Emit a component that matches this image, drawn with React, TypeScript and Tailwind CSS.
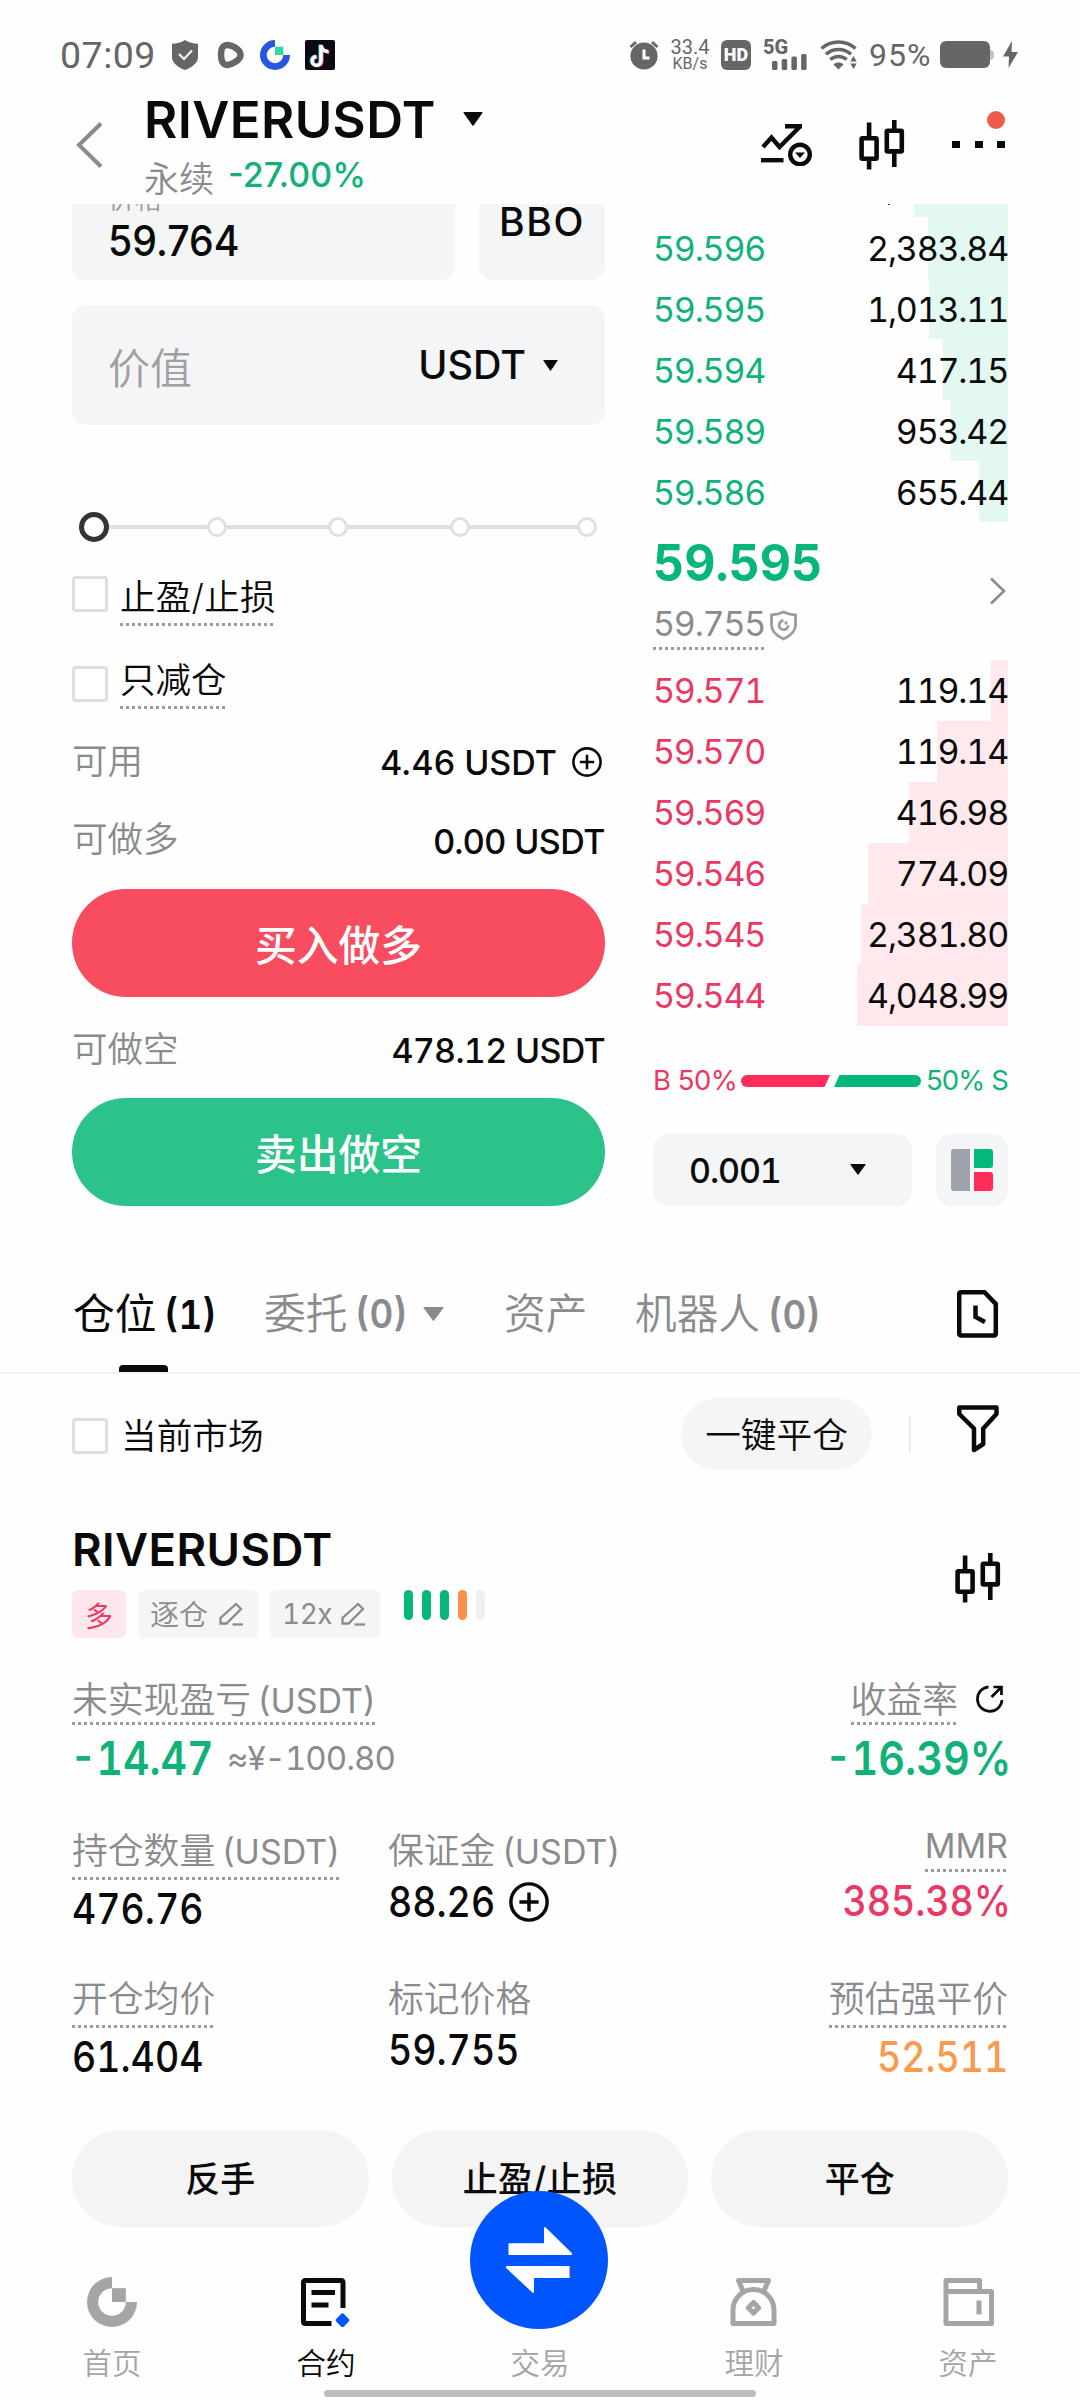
import type { ReactNode } from 'react';

/* ---------- small building blocks ---------- */

function Dots() {
  return <div className="h-[3px] w-full bg-[repeating-linear-gradient(90deg,#9b9c9e_0_3px,transparent_3px_6px)]" />;
}

function Caret({ className }: { className: string }) {
  return (
    <svg viewBox="0 0 20 14" preserveAspectRatio="none" className={className} fill="currentColor">
      <path d="M1 0h18q1 0 .4 1L10.6 13.4q-.6.8-1.2 0L.6 1Q0 0 1 0z" />
    </svg>
  );
}

function CheckBox({ className = '' }: { className?: string }) {
  return <div className={`size-[36px] shrink-0 rounded-[4px] border-[3px] border-[#dedede] bg-white ${className}`} />;
}

function PlusCircle({ size, stroke }: { size: number; stroke: number }) {
  return (
    <svg width={size} height={size} viewBox="0 0 30 30" fill="none" stroke="#0a0a0a" strokeWidth={stroke}>
      <circle cx="15" cy="15" r="13.6" />
      <path d="M15 7.8v14.4M7.8 15h14.4" />
    </svg>
  );
}

function Candles() {
  return (
    <svg width="46" height="50" viewBox="0 0 46 50" fill="none" stroke="#0a0a0a" strokeWidth="4.6">
      <rect x="2.6" y="18.2" width="15" height="20.6" rx="1" />
      <rect x="27.8" y="10.8" width="15" height="20.6" rx="1" />
      <path d="M10.1 2.5V18M10.1 39v10.500M35.300 0v11M35.300 32v15" />
    </svg>
  );
}

function GateMark({ size, ring, square }: { size: number; ring: string; square: string }) {
  return (
    <svg width={size} height={size} viewBox="0 0 50 50">
      <path d="M25 0v11.2A13.8 13.8 0 1 0 38.8 25H50A25 25 0 1 1 25 0z" fill={ring} />
      <path d="M25 11.2h13.8V25H25z" fill={square} />
    </svg>
  );
}

/* ---------- status bar ---------- */

function StatusBar() {
  return (
    <div className="flex h-[86px] items-center pt-[23px] text-[#666]">
      <span className="ml-[60px] w-[112px] font-[Roboto] text-[37.500px] leading-[40px] tracking-[0.500px]">07:09</span>
      <svg width="26" height="30" viewBox="0 0 26 30">
        <path d="M13 0c4 2.600 8 3.600 13 3.800V17c0 6-6 10.500-13 13C6 27.500 0 23 0 17V3.800C5 3.600 9 2.600 13 0z" fill="#666" />
        <path d="M7 14l5 5 8-8.500" fill="none" stroke="#fff" strokeWidth="2" />
      </svg>
      <svg className="ml-[18px]" width="28" height="28" viewBox="0 0 28 28">
        <path d="M9 4.500C14 2.500 24 8 24.500 13.500S14 25.500 9 23.500 3.500 6.500 9 4.500z" fill="none" stroke="#666" strokeWidth="6.500" />
      </svg>
      <div className="ml-[16px]">
        <GateMark size={30} ring="#2856e0" square="#2bdca0" />
      </div>
      <svg className="ml-[15px]" width="30" height="30" viewBox="0 0 30 30">
        <rect width="30" height="30" rx="2" fill="#0b0a12" />
        <g fill="none" strokeWidth="3.400">
          <path d="M15.200 4.500v16.200a4.400 4.400 0 1 1-4.600-4.400M15.200 5c.6 3.800 3.400 6 7.400 6.200" stroke="#3fe6e0" />
          <path d="M17 5.500v16a4.400 4.400 0 1 1-4.600-4.400M17 6c.6 3.800 3.400 6 7.400 6.200" stroke="#f0325a" />
          <path d="M16.100 5v16a4.400 4.400 0 1 1-4.600-4.400M16.100 5.500c.6 3.800 3.400 6 7.400 6.200" stroke="#fff" />
        </g>
      </svg>

      <svg className="ml-[294px]" width="30" height="30" viewBox="0 0 30 30">
        <circle cx="15" cy="16" r="13.600" fill="#666" />
        <path d="M1.500 7L7 2M28.500 7L23 2" stroke="#666" strokeWidth="3" />
        <path d="M15 9.500v8.500h5.500" fill="none" stroke="#fff" strokeWidth="3" />
      </svg>
      <div className="ml-[10px] flex w-[42px] flex-col items-center font-[Roboto]">
        <span className="text-[20px] leading-[18px]">33.4</span>
        <span className="text-[16px] leading-[16px]">KB/s</span>
      </div>
      <div className="ml-[10px] flex size-[30px] items-center justify-center rounded-[6px] bg-[#666] font-[Roboto] text-[18px] leading-[30px] font-black text-white">
        HD
      </div>
      <div className="ml-[12px] flex h-[30px] w-[45px] flex-col">
        <span className="h-[14px] font-[Roboto] text-[20px] leading-[14px] font-extrabold">5G</span>
        <svg className="ml-[9px]" width="36" height="16" viewBox="0 0 36 16" fill="#666">
          <rect x="0" y="7" width="5.500" height="9" rx="1.500" />
          <rect x="9.700" y="5" width="5.500" height="11" rx="1.500" />
          <rect x="19.400" y="2.500" width="5.500" height="13.500" rx="1.500" />
          <rect x="29.100" y="0" width="5.500" height="16" rx="1.500" />
        </svg>
      </div>
      <svg className="ml-[12px]" width="37" height="30" viewBox="0 0 37 30" fill="none" stroke="#666" strokeWidth="3.400">
        <path d="M1.500 8.500c9.500-8.600 24.500-8.600 34 0" />
        <path d="M6 14.200c7-6.300 18-6.300 25 0" />
        <path d="M10.300 19.600c4.700-4.200 11.700-4.200 16.400 0" />
        <path d="M13.500 24.500c2.900-2.600 7.100-2.600 10 0L18.500 29.500z" fill="#666" stroke="none" />
        <path d="M33.500 16l3.200 5.400h-6.400zM33.500 29l3.200-5.400h-6.400z" fill="#666" stroke="none" />
      </svg>
      <span className="ml-[12px] w-[71px] font-[Roboto] text-[32px] leading-[34px] tracking-[1px]">95%</span>
      <div className="h-[27px] w-[50px] rounded-[6px] bg-[#666]" />
      <div className="h-[10px] w-[4px] rounded-r bg-[#c4c4c4]" />
      <svg className="ml-[9px]" width="15" height="27" viewBox="0 0 15 27" fill="#666">
        <path d="M9 0L0 15.500h6L5.500 27 15 11H8.600z" />
      </svg>
    </div>
  );
}

/* ---------- page header ---------- */

function Header() {
  return (
    <div className="flex h-[118px]">
      <svg className="mt-[36px] ml-[76px] shrink-0" width="27" height="46" viewBox="0 0 27 46" fill="none" stroke="#8a8b8d" strokeWidth="4">
        <path d="M25 1.500L3 23l22 21.500" />
      </svg>
      <div className="ml-[41px] w-[450px]">
        <div className="flex h-[65px] items-center">
          <h1 className="pt-[1px] text-[51px] leading-[65px] font-semibold tracking-[0.400px]">RIVERUSDT</h1>
          <Caret className="ml-[27px] h-[14px] w-[20px]" />
        </div>
        <div className="flex h-[46px] items-center">
          <span className="pt-[10px] text-[35px] leading-[46px] font-[350] text-[#8a8b8d]">永续</span>
          <span className="ml-[14px] pt-[1px] text-[34px] leading-[46px] font-medium text-[#10b27a]">-27.00%</span>
        </div>
      </div>
      <svg className="mt-[36px] ml-[167px] shrink-0" width="51" height="44" viewBox="0 0 51 44" fill="none" stroke="#0a0a0a" strokeWidth="4.400">
        <path d="M2 25l8.500-9.500 8 9.500L39 4.500M24 4.200h17" />
        <path d="M0 38.200h22.500" />
        <circle cx="39" cy="32.500" r="9.800" />
        <path d="M34 30.500h10l-5 5.500z" fill="#0a0a0a" stroke="none" />
      </svg>
      <div className="mt-[33.500px] ml-[47px] shrink-0">
        <Candles />
      </div>
      <div className="relative ml-[47px] flex h-[62px] w-[53px] items-end justify-between">
        <i className="h-[7px] w-[8px] bg-[#0a0a0a]" />
        <i className="h-[7px] w-[8px] bg-[#0a0a0a]" />
        <i className="h-[7px] w-[8px] bg-[#0a0a0a]" />
        <i className="absolute top-[25px] right-0 size-[18px] rounded-full bg-[#f05a4b]" />
      </div>
    </div>
  );
}

/* ---------- order form ---------- */

function Slider() {
  return (
    <div className="relative mt-[87px] flex h-[30px] items-center">
      <div className="ml-[20px] h-[4px] w-[490px] bg-[#dedede]" />
      <i className="absolute top-0 left-[7px] size-[30px] rounded-full border-[5px] border-[#333] bg-white" />
      <i className="absolute top-[5px] left-[135px] size-[20px] rounded-full border-[3px] border-[#e0e0e0] bg-white" />
      <i className="absolute top-[5px] left-[256px] size-[20px] rounded-full border-[3px] border-[#e0e0e0] bg-white" />
      <i className="absolute top-[5px] left-[378px] size-[20px] rounded-full border-[3px] border-[#e0e0e0] bg-white" />
      <i className="absolute top-[5px] left-[505px] size-[20px] rounded-full border-[3px] border-[#e0e0e0] bg-white" />
    </div>
  );
}

function FormLine({ label, className, children }: { label: string; className: string; children: ReactNode }) {
  return (
    <div className={`flex h-[40px] items-center justify-between ${className}`}>
      <span className="text-[35.500px] leading-[40px] font-[350] text-[#8a8b8d]">{label}</span>
      {children}
    </div>
  );
}

function OrderForm() {
  return (
    <div className="flex w-[533px] flex-col">
      <div className="-mt-[44px] flex h-[120px] gap-[24px]">
        <div className="flex w-[383px] flex-col rounded-[14px] bg-[#f4f5f7] pt-[24px] pl-[36px]">
          <span className="text-[27px] leading-[32px] font-[350] text-[#9a9b9d]">价格</span>
          <span className="origin-left scale-x-[0.935] text-[42px] leading-[50px] font-medium">59.764</span>
        </div>
        <div className="flex w-[126px] items-center justify-center rounded-[14px] bg-[#f4f5f7] pt-[4px] text-[39px] font-medium tracking-[1.600px]">BBO</div>
      </div>
      <div className="mt-[25px] flex h-[120px] items-center rounded-[14px] bg-[#f4f5f7] pr-[47px] pl-[36px]">
        <span className="pt-[6px] text-[42px] font-[350] text-[#9fa0a2]">价值</span>
        <span className="ml-auto pt-[1px] text-[39.500px] font-medium">USDT</span>
        <Caret className="ml-[17px] h-[11px] w-[15px]" />
      </div>
      <Slider />
      <div className="mt-[30px] flex h-[54px]">
        <CheckBox className="mt-[4px]" />
        <div className="ml-[12px]">
          <div className="h-[51px] text-[35.500px] leading-[52px] font-[350] tracking-[0.300px]">止盈/止损</div>
          <Dots />
        </div>
      </div>
      <div className="mt-[30px] flex h-[54px]">
        <CheckBox className="mt-[10px]" />
        <div className="ml-[12px]">
          <div className="h-[50px] text-[35.500px] leading-[50px] font-[350]">只减仓</div>
          <Dots />
        </div>
      </div>
      <FormLine label="可用" className="mt-[32px]">
        <span className="flex items-center text-[34px] font-medium">
          4.46 USDT
          <span className="mr-[3px] ml-[15px]">
            <PlusCircle size={30} stroke={2.6} />
          </span>
        </span>
      </FormLine>
      <FormLine label="可做多" className="mt-[38px]">
        <span className="pt-[2px] text-[34px] font-medium tracking-[-0.500px]">0.00 USDT</span>
      </FormLine>
      <button className="mt-[29px] h-[108px] rounded-full bg-[#f84c60] pt-[6px] text-[41.800px] font-medium text-white">买入做多</button>
      <FormLine label="可做空" className="mt-[33px]">
        <span className="text-[34px] font-medium tracking-[-0.700px] tabular-nums">478.12 USDT</span>
      </FormLine>
      <button className="mt-[28px] h-[108px] rounded-full bg-[#2bc389] pt-[6px] text-[41.800px] font-medium text-white">卖出做空</button>
    </div>
  );
}

/* ---------- order book ---------- */

const upper = [
  { price: '59.596', size: '2,383.84', depth: 80 },
  { price: '59.595', size: '1,013.11', depth: 79 },
  { price: '59.594', size: '417.15', depth: 65 },
  { price: '59.589', size: '953.42', depth: 57 },
  { price: '59.586', size: '655.44', depth: 29 },
];

const lower = [
  { price: '59.571', size: '119.14', depth: 17 },
  { price: '59.570', size: '119.14', depth: 71 },
  { price: '59.569', size: '416.98', depth: 99 },
  { price: '59.546', size: '774.09', depth: 140 },
  { price: '59.545', size: '2,381.80', depth: 147 },
  { price: '59.544', size: '4,048.99', depth: 151 },
];

function BookRow({ price, size, depth, green }: { price: string; size: string; depth: number; green?: boolean }) {
  return (
    <div className="relative flex h-[61px] items-center justify-between pt-[1px] text-[34px] leading-[57px] tracking-[-1.200px] tabular-nums">
      <div className={`absolute inset-y-0 right-0 ${green ? 'bg-[#e3f8f0]' : 'bg-[#ffe9ed]'}`} style={{ width: depth }} />
      <span className={green ? 'text-[#10b27a]' : 'text-[#ea3862]'}>{price}</span>
      <span className="relative">{size}</span>
    </div>
  );
}

function OrderBook() {
  return (
    <div className="ml-[48px] flex w-[355px] flex-col">
      <div className="flex h-[13px] items-start justify-end">
        <i className="mr-[24px] h-[1px] w-[2px] bg-[#333]" />
        <div className="h-[13px] w-[94px] bg-[#e3f8f0]" />
      </div>
      {upper.map((r) => (
        <BookRow key={r.price} {...r} green />
      ))}
      <div className="flex h-[137.500px] items-center justify-between">
        <div className="flex flex-col">
          <span className="w-fit origin-left scale-x-[0.948] pt-[1px] text-[51px] leading-[62px] font-bold tabular-nums text-[#06b67b]">59.595</span>
          <div className="flex items-start">
            <div className="w-[111px]">
              <div className="h-[53px] text-[34px] leading-[60px] tracking-[-1.200px] tabular-nums text-[#8a8b8d]">59.755</div>
              <Dots />
            </div>
            <svg className="mt-[16px] ml-[5px]" width="29" height="31" viewBox="0 0 29 31" fill="none" stroke="#9b9c9e" strokeWidth="2.800">
              <path d="M14.500 2c3.500 1.800 7.500 2.800 12 3v10c0 6.500-5.500 11-12 14-6.500-3-12-7.500-12-14V5c4.500-.2 8.500-1.200 12-3z" />
              <path d="M14.500 10.500a4.600 4.600 0 1 0 4.800 4.800" />
              <path d="M15.500 11.500h3v3h-3z" fill="#9b9c9e" stroke="none" />
            </svg>
          </div>
        </div>
        <svg className="mr-[2px]" width="17" height="28" viewBox="0 0 17 28" fill="none" stroke="#8a8b8d" strokeWidth="2.600">
          <path d="M2 1.500L15 14 2 26.500" />
        </svg>
      </div>
      {lower.map((r) => (
        <BookRow key={r.price} {...r} />
      ))}
      <div className="mt-[33px] flex h-[44px] items-center text-[27.500px]">
        <span className="w-[88px] tracking-[-0.500px] whitespace-nowrap text-[#ea3862]">B 50%</span>
        <svg width="180" height="12" viewBox="0 0 180 12">
          <path d="M6 0h83l-5.500 12H6A6 6 0 0 1 6 0z" fill="#ff2c5a" />
          <path d="M98.500 0H174a6 6 0 0 1 0 12H93z" fill="#04b77c" />
        </svg>
        <span className="ml-auto tracking-[-0.900px] whitespace-nowrap text-[#10b27a]">50% S</span>
      </div>
      <div className="mt-[31px] flex h-[72px] justify-between">
        <div className="flex w-[259px] items-center rounded-[16px] bg-[#f4f5f7] pr-[46px] pl-[36px]">
          <span className="pt-[2px] text-[34px] font-medium tracking-[-1.100px] tabular-nums">0.001</span>
          <Caret className="ml-auto h-[11px] w-[16px]" />
        </div>
        <div className="flex w-[72px] items-center justify-center gap-[4px] rounded-[16px] bg-[#f4f5f7]">
          <i className="h-[42px] w-[19px] rounded-l-[3px] bg-[#9ea2aa]" />
          <div className="flex flex-col gap-[4px]">
            <i className="size-[19px] rounded-r-[3px] bg-[#04b77c]" />
            <i className="size-[19px] rounded-r-[3px] bg-[#ff2c5a]" />
          </div>
        </div>
      </div>
    </div>
  );
}

/* ---------- position tabs ---------- */

function Count({ n }: { n: string }) {
  return <span className="ml-[8px] inline-block origin-left scale-x-[0.92] text-[40px] font-semibold tabular-nums">({n})</span>;
}

function Tabs() {
  return (
    <div className="flex h-[138px] border-b-2 border-[#f1f1f1] text-[41.700px] leading-[60px] text-[#8a8b8d]">
      <div className="ml-[73px] flex w-[144px] flex-col">
        <div className="mt-[48px] h-[60px] whitespace-nowrap text-[#0a0a0a]">
          仓位
          <Count n="1" />
        </div>
        <i className="mt-auto ml-[46px] h-[7px] w-[49px] rounded-t-[4px] bg-[#0a0a0a]" />
      </div>
      <div className="mt-[48px] ml-[47px] flex h-[60px] w-[182px] items-center font-[350] whitespace-nowrap">
        委托
        <Count n="0" />
        <Caret className="ml-[10px] h-[14px] w-[21px]" />
      </div>
      <div className="mt-[48px] ml-[58px] h-[60px] w-[84px] font-[350]">资产</div>
      <div className="mt-[48px] ml-[47px] h-[60px] w-[190px] font-[350] whitespace-nowrap">
        机器人
        <Count n="0" />
      </div>
      <svg className="mt-[54px] mr-[81px] ml-auto" width="42" height="48" viewBox="0 0 42 48" fill="none" stroke="#0a0a0a" strokeWidth="4.500">
        <path d="M4 2.300h23.500L38.800 14v29.500q0 2-2 2H4.200q-2 0-2-2V4.300q0-2 2-2z" />
        <path d="M18.500 15.500V27l9.500 5" />
      </svg>
    </div>
  );
}

function FilterRow() {
  return (
    <div className="mt-[24px] flex h-[72px] items-center pl-[72px]">
      <CheckBox className="mt-[4px]" />
      <span className="ml-[13px] pt-[5px] text-[35.700px] font-[350]">当前市场</span>
      <div className="mr-[37px] ml-auto flex h-[72px] w-[191px] items-center justify-center rounded-full bg-[#f5f5f5] pt-[3px] text-[35.700px] font-[350]">
        一键平仓
      </div>
      <i className="h-[36px] w-[2px] bg-[#ececec]" />
      <svg className="mt-[-10px] mr-[81px] ml-[46px]" width="42" height="48" viewBox="0 0 42 48" fill="none" stroke="#0a0a0a" strokeWidth="4.500" strokeLinejoin="round">
        <path d="M2.300 2.500h37.200v6.500L26.200 23.500V39l-9.200 6V23.500L2.300 9z" />
      </svg>
    </div>
  );
}

/* ---------- position card ---------- */

function Pencil() {
  return (
    <svg width="25" height="24" viewBox="0 0 25 24" fill="none" stroke="#8a8b8d" strokeWidth="2.300">
      <path d="M17 2l5 5L7.500 21.500h-6V16z" />
      <path d="M13.500 22.500H24" />
    </svg>
  );
}

function Label({ text, unit, dotted = true, tight }: { text: string; unit?: string; dotted?: boolean; tight?: boolean }) {
  return (
    <div className="flex w-fit flex-col">
      <div className={`flex items-start leading-[48px] whitespace-nowrap text-[#8a8b8d] ${tight ? 'h-[49px]' : 'h-[53px]'}`}>
        <span className="pt-[3px] text-[35.800px] font-[350]">{text}</span>
        {unit && <span className="ml-[7px] pt-[4px] text-[34px]">{unit}</span>}
      </div>
      {dotted && <Dots />}
    </div>
  );
}

function Value({ children, className = '' }: { children: ReactNode; className?: string }) {
  return <span className={`block w-fit scale-x-[0.892] text-[42px] leading-[50px] font-medium tabular-nums ${className}`}>{children}</span>;
}

function PositionCard() {
  return (
    <div className="flex flex-col px-[72px]">
      <div className="mt-[50px] flex h-[118px] justify-between">
        <div className="flex flex-col">
          <h2 className="h-[60px] text-[45.500px] leading-[60px] font-semibold tracking-[0.400px]">RIVERUSDT</h2>
          <div className="mt-[10px] flex h-[48px] items-start text-[28px] leading-[48px] text-[#8a8b8d]">
            <span className="flex h-[48px] w-[54px] justify-center rounded-[6px] bg-[#ffe7ed] pt-[3px] text-[28px] text-[#ea3862]">多</span>
            <span className="ml-[12px] flex h-[48px] w-[120px] items-center rounded-[6px] bg-[#f5f5f5] pl-[12px]">
              <span className="mr-[11px] pt-[3px] text-[29px] font-[350]">逐仓</span>
              <Pencil />
            </span>
            <span className="ml-[12px] flex h-[48px] w-[110px] items-center rounded-[6px] bg-[#f5f5f5] pl-[12px]">
              <span className="mr-[9px] tracking-[-0.500px] tabular-nums [font-variant-ligatures:no-contextual]">12x</span>
              <Pencil />
            </span>
            <span className="ml-[24px] flex gap-[9px]">
              <i className="h-[30px] w-[9px] rounded-full bg-[#06b67b]" />
              <i className="h-[30px] w-[9px] rounded-full bg-[#06b67b]" />
              <i className="h-[30px] w-[9px] rounded-full bg-[#06b67b]" />
              <i className="h-[30px] w-[9px] rounded-full bg-[#fb9046]" />
              <i className="h-[30px] w-[9px] rounded-full bg-[#f0f0f0]" />
            </span>
          </div>
        </div>
        <div className="mt-[33px] mr-[7px]">
          <Candles />
        </div>
      </div>

      <div className="mt-[35px] flex h-[115px] justify-between">
        <div>
          <Label text="未实现盈亏" unit="(USDT)" tight />
          <div className="flex h-[65px] items-center">
            <span className="ml-[-2px] w-[157px] origin-left scale-x-[0.89] text-[46px] leading-[60px] font-semibold tabular-nums text-[#10b27a]">
              -14.47
            </span>
            <span className="pt-[3px] text-[33px] tracking-[-1px] tabular-nums text-[#8a8b8d]">≈¥-100.80</span>
          </div>
        </div>
        <div className="flex flex-col items-end">
          <div className="flex items-center">
            <Label text="收益率" tight />
            <svg className="mr-[4px] mb-[1px] ml-[18px]" width="28" height="28" viewBox="0 0 28 28" fill="none" stroke="#0a0a0a" strokeWidth="2.700">
              <path d="M12.500 1.800A12.300 12.300 0 1 0 26 15" />
              <path d="M15.500 12L25 2.500M17.500 2h8v8" />
            </svg>
          </div>
          <div className="flex h-[65px] shrink-0 items-center">
            <span className="mr-[-3px] origin-right scale-x-[0.9] text-[46px] leading-[60px] font-semibold tabular-nums text-[#10b27a]">-16.39%</span>
          </div>
        </div>
      </div>

      <div className="mt-[36px] flex h-[112px]">
        <div className="w-[316px]">
          <Label text="持仓数量" unit="(USDT)" />
          <Value className="mt-[4px] origin-left">476.76</Value>
        </div>
        <div>
          <Label text="保证金" unit="(USDT)" dotted={false} />
          <div className="flex items-center">
            <Value className="origin-left">88.26</Value>
            <div className="ml-[1px]">
              <PlusCircle size={40} stroke={2.6} />
            </div>
          </div>
        </div>
        <div className="ml-auto flex flex-col items-end">
          <div>
            <div className="h-[45px] text-[34px] leading-[44px] text-[#8a8b8d]">MMR</div>
            <Dots />
          </div>
          <Value className="mt-[4px] mr-[-3px] origin-right scale-x-[0.88] text-[#ea3862]">385.38%</Value>
        </div>
      </div>

      <div className="mt-[36px] flex h-[112px]">
        <div className="w-[316px]">
          <Label text="开仓均价" />
          <Value className="mt-[4px] origin-left">61.404</Value>
        </div>
        <div>
          <Label text="标记价格" dotted={false} />
          <Value className="origin-left">59.755</Value>
        </div>
        <div className="ml-auto flex flex-col items-end">
          <Label text="预估强平价" />
          <Value className="mt-[4px] origin-right text-[#f99a4e]">52.511</Value>
        </div>
      </div>

      <div className="mt-[46px] grid h-[96px] grid-cols-3 gap-[23px] text-[35px] leading-[96px] font-medium">
        <button className="rounded-full bg-[#f4f4f4] pt-[1px]">反手</button>
        <button className="rounded-full bg-[#f4f4f4] pt-[1px] tracking-[0.300px]">止盈/止损</button>
        <button className="rounded-full bg-[#f4f4f4] pt-[1px]">平仓</button>
      </div>
    </div>
  );
}

/* ---------- bottom navigation ---------- */

function NavItem({ label, active, children }: { label: string; active?: boolean; children?: ReactNode }) {
  return (
    <div className="flex w-[214px] flex-col items-center">
      <div className="mt-[42px] h-[61px]">{children}</div>
      <span className={`text-[29.500px] leading-[50px] font-[350] ${active ? 'text-[#0a0a0a]' : 'text-[#a3a5a7]'}`}>{label}</span>
    </div>
  );
}

function BottomNav() {
  return (
    <nav className="relative flex h-[165px] flex-col bg-[#fefefe]">
      <div className="flex justify-center">
        <NavItem label="首页">
          <GateMark size={50} ring="#a3a5a7" square="#a3a5a7" />
        </NavItem>
        <NavItem label="合约" active>
          <svg width="50" height="50" viewBox="0 0 50 50" fill="none" stroke="#0a0a0a" strokeWidth="5">
            <path d="M42 31V5.500q0-2-2-2H4.500q-2 0-2 2v39q0 2 2 2H30.500" />
            <path d="M10.500 15.500H34M10.500 28H27.500" />
            <path d="M41.500 38l5 5.300-5 5.200-5-5.200z" fill="#0055ff" stroke="#0055ff" strokeWidth="3.500" strokeLinejoin="round" />
          </svg>
        </NavItem>
        <NavItem label="交易" />
        <NavItem label="理财">
          <svg width="50" height="50" viewBox="0 0 50 50" fill="none" stroke="#a3a5a7" strokeWidth="5" strokeLinejoin="round">
            <path d="M14 14L9.500 3.500h30L35 14" />
            <path d="M4 46.500V33a20.500 20.500 0 0 1 41 0v13.500z" />
            <path d="M24.500 25.500l5.200 5.300-5.200 5.300-5.200-5.300z" />
          </svg>
        </NavItem>
        <NavItem label="资产">
          <svg width="51" height="50" viewBox="0 0 51 50" fill="none" stroke="#a3a5a7" strokeWidth="5" strokeLinejoin="round">
            <path d="M3 14.500V3.500h33.500v11" />
            <path d="M3 14.500h45.500v32H3z" />
            <path d="M36 23.500v14" />
          </svg>
        </NavItem>
      </div>
      <button className="absolute top-[-44px] left-[470px] flex size-[138px] items-center justify-center rounded-full bg-[#0055ff]">
        <svg width="68" height="68" viewBox="0 0 68 68" fill="#fff">
          <path d="M3.500 17.200H39V2.500q0-2.500 2-.8L66.800 27q1 2-1 2H3.500z" />
          <path d="M64.600 52H29V65.500q0 2.500-2 .8L1.200 42q-1-2 1-2h62.400z" />
        </svg>
      </button>
      <i className="absolute bottom-[3px] left-[324px] h-[7px] w-[432px] rounded-full bg-[#bdbdbd]" />
    </nav>
  );
}

export default function App() {
  return (
    <div className="flex h-[2400px] w-[1080px] flex-col overflow-hidden bg-[#fefefe] text-[#0a0a0a] [font-family:Inter,'Noto_Sans_CJK_SC',sans-serif]">
      <StatusBar />
      <Header />
      <main className="flex h-[1032px] shrink-0 overflow-hidden px-[72px]">
        <OrderForm />
        <OrderBook />
      </main>
      <Tabs />
      <FilterRow />
      <PositionCard />
      <div className="mt-[9px]">
        <BottomNav />
      </div>
    </div>
  );
}
